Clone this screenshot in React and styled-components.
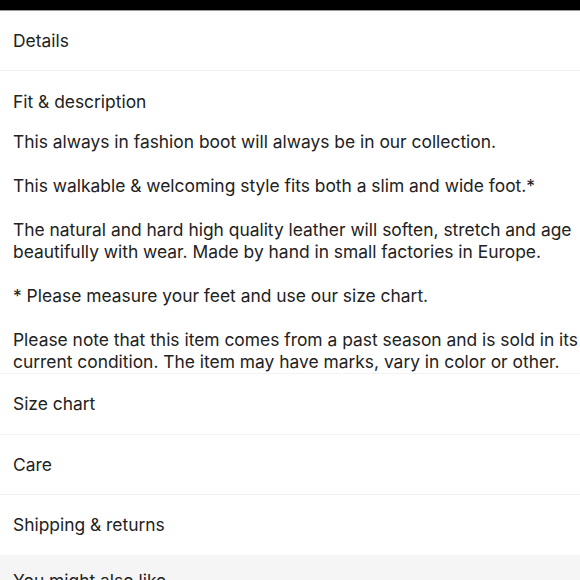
import React from 'react';
import styled, { createGlobalStyle } from 'styled-components';

const GlobalStyle = createGlobalStyle`
  html, body {
    margin: 0;
    padding: 0;
    background: #fff;
    overflow: hidden;
  }
  body {
    font-family: Inter, "Noto Sans", sans-serif;
    color: #222;
    -webkit-font-smoothing: antialiased;
  }
`;

const Page = styled.div`
  width: 610px;
  height: 580px;
  overflow: hidden;
`;

const TopBar = styled.div`
  height: 10px;
  background: #000;
  border-bottom: 1px solid #9a9a9a;
`;

const Row = styled.div`
  height: ${(p) => p.$h || 59.6}px;
  display: flex;
  align-items: center;
  padding: 0 13px;
  font-size: 17.4px;
  border-bottom: 1px solid #f3f3f3;
`;

const Section = styled.div`
  padding: 20px 13px 0;
  height: 282px;
  overflow: hidden;
  border-bottom: 1px solid #f3f3f3;
  font-size: 17.4px;
  line-height: 22px;
`;

const Heading = styled.div`
  margin-bottom: 18px;
`;

const Paragraph = styled.p`
  margin: 0 0 22px;
`;

const Footer = styled.div`
  background: #f5f5f5;
  padding: 14px 13px 0;
  height: 60px;
  font-size: 17.4px;
  line-height: 22px;
`;

const rows = ['Size chart', 'Care', 'Shipping & returns'];

export default function App() {
  return (
    <>
      <GlobalStyle />
      <Page>
        <TopBar />
        <Row $h={59}>Details</Row>
        <Section>
          <Heading>Fit &amp; description</Heading>
          <Paragraph>This always in fashion boot will always be in our collection.</Paragraph>
          <Paragraph>This walkable &amp; welcoming style fits both a slim and wide foot.*</Paragraph>
          <Paragraph>
            The natural and hard high quality leather will soften, stretch and age beautifully
            with wear. Made by hand in small factories in Europe.
          </Paragraph>
          <Paragraph>* Please measure your feet and use our size chart.</Paragraph>
          <Paragraph>
            Please note that this item comes from a past season and is sold in its current
            condition. The item may have marks, vary in color or other.
          </Paragraph>
        </Section>
        {rows.map((r) => (
          <Row key={r}>{r}</Row>
        ))}
        <Footer>You might also like</Footer>
      </Page>
    </>
  );
}
